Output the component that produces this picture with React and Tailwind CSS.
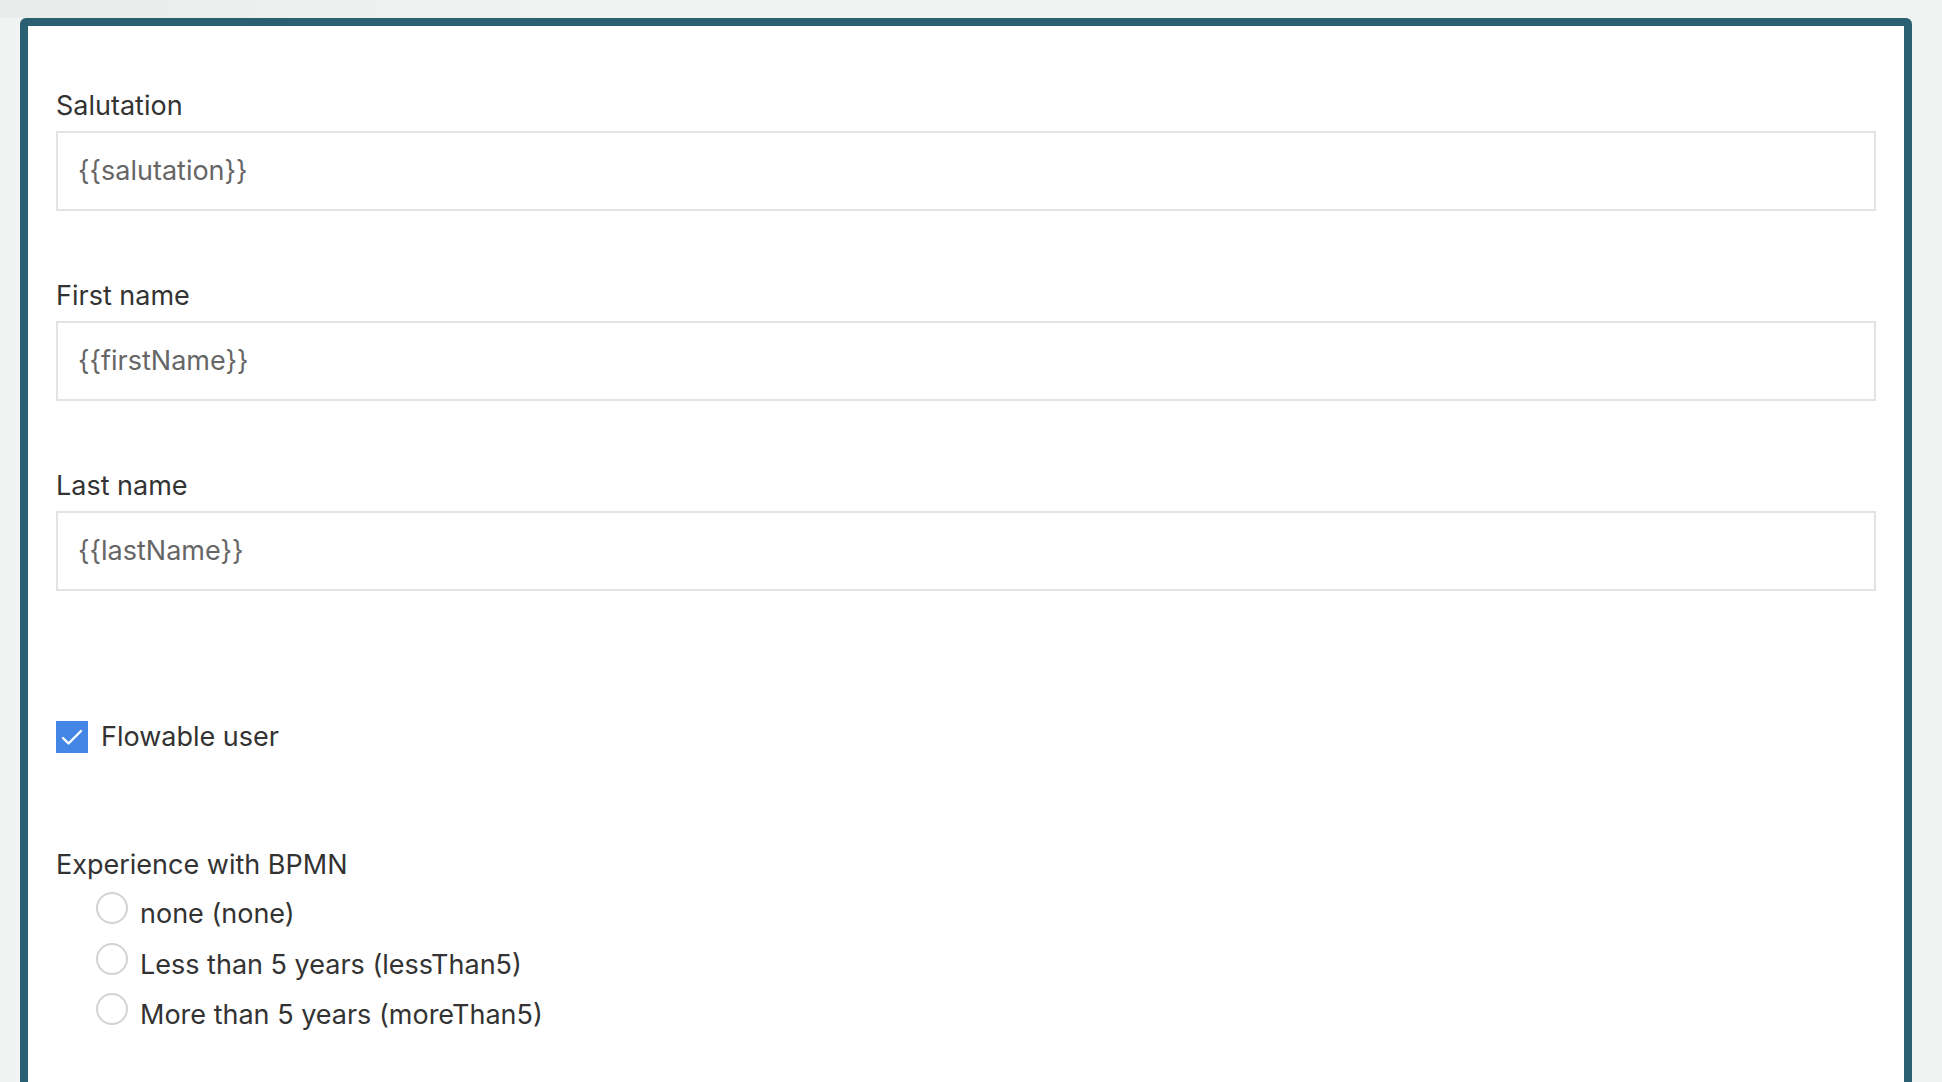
export default function App() {
  const fields = [
    { label: "Salutation", value: "{{salutation}}" },
    { label: "First name", value: "{{firstName}}" },
    { label: "Last name", value: "{{lastName}}" },
  ];
  const options = [
    "none (none)",
    "Less than 5 years (lessThan5)",
    "More than 5 years (moreThan5)",
  ];

  return (
    <div
      className="h-[1082px] overflow-hidden bg-[#f1f3f3] text-[#333]"
      style={{ fontFamily: "Inter, 'Noto Sans', sans-serif" }}
    >
      {/* faint top shade */}
      <div className="h-[18px] bg-gradient-to-r from-[#e9ebeb] via-[#eef0f0] to-[#f1f3f3] via-[15%] to-[30%]" />

      <div className="pl-[20px] pr-[30px]">
        <div className="h-[1200px] bg-white border-[8px] border-[#2a6072] rounded-t-[6px] px-[28px] pt-[62px] text-[27px] flex flex-col">
          {fields.map((f) => (
            <div key={f.label} className="mb-[67px]">
              <div className="leading-[36px] mb-[7px]">{f.label}</div>
              <div className="h-[80px] border-2 border-[#e3e3e3] flex items-center px-[20px] text-[#666]">
                {f.value}
              </div>
            </div>
          ))}

          {/* checkbox */}
          <div className="mt-[61px] flex items-center gap-[13px] leading-[36px]">
            <span className="w-[32px] h-[32px] bg-[#4386e6] flex items-center justify-center">
              <svg width="28" height="28" viewBox="0 0 28 28" fill="none" stroke="white" strokeWidth="2.4" strokeLinecap="round" strokeLinejoin="round">
                <path d="M5 15l5.5 5.5L23 8" />
              </svg>
            </span>
            <span>Flowable user</span>
          </div>

          {/* radios */}
          <div className="mt-[92px]">
            <div className="leading-[36px] mb-[6px]">Experience with BPMN</div>
            <div className="pl-[40px] flex flex-col">
              {options.map((o) => (
                <div key={o} className="flex items-center gap-[12px] h-[50.5px]">
                  <span className="w-[32px] h-[32px] rounded-full border-2 border-[#d2d2d2] -translate-y-[6px]" />
                  <span>{o}</span>
                </div>
              ))}
            </div>
          </div>
        </div>
      </div>
    </div>
  );
}
